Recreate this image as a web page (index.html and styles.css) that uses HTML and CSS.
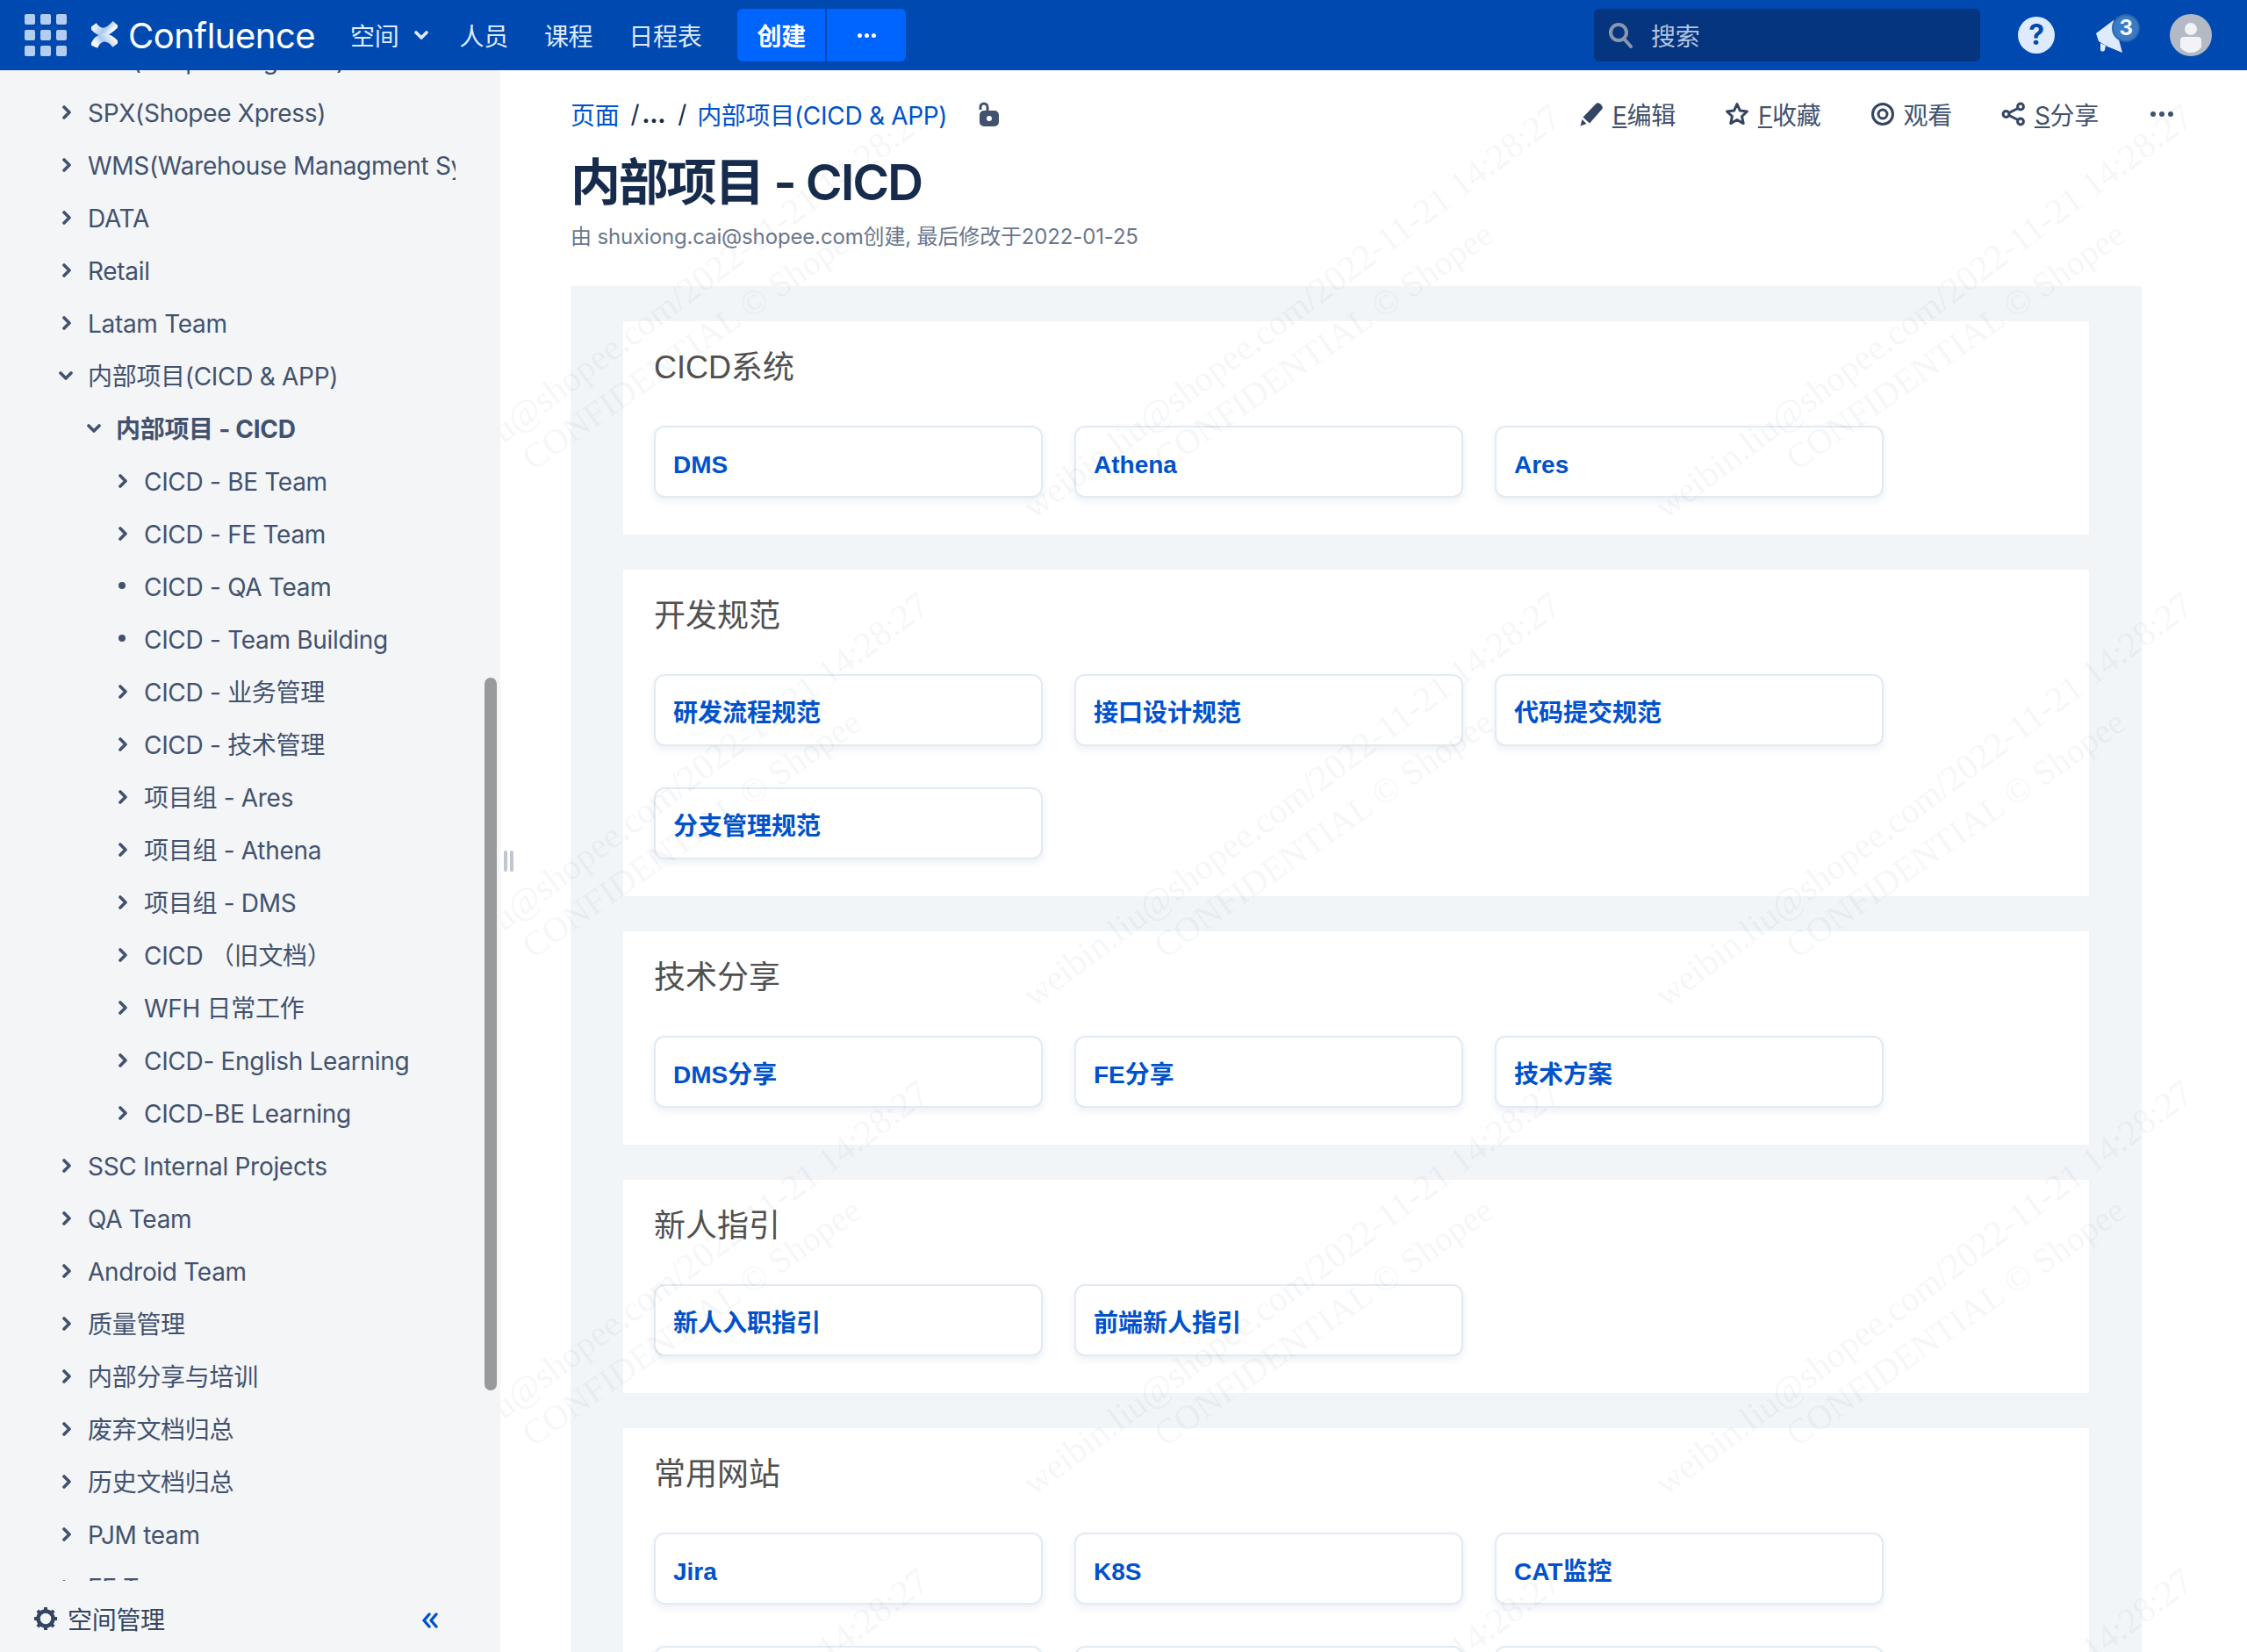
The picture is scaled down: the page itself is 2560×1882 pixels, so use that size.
FILE: index.html
```html
<!DOCTYPE HTML>
<html>
<head>
	<meta charset="utf-8">
	<title>内部项目 - CICD</title>
	<link rel="stylesheet" href="styles.css">
</head>
<body>
	<svg class="defs" width="0" height="0">
		<defs>
			<symbol id="chev-r" viewBox="0 0 10 16"><path d="M2 2l6 6-6 6" fill="none" stroke="currentColor" stroke-width="3.600" stroke-linecap="round" stroke-linejoin="round"/></symbol>
			<symbol id="chev-d" viewBox="0 0 16 10"><path d="M2 2l6 6 6-6" fill="none" stroke="currentColor" stroke-width="3.600" stroke-linecap="round" stroke-linejoin="round"/></symbol>
			<linearGradient id="logo-a" x1="0" y1="0" x2="1" y2="0.300"><stop offset="0" stop-color="#fff"/><stop offset="0.65" stop-color="#a9c8f0"/><stop offset="1" stop-color="#f4f8ff"/></linearGradient>
			<linearGradient id="logo-b" x1="1" y1="0" x2="0" y2="0.300"><stop offset="0" stop-color="#fff"/><stop offset="0.65" stop-color="#a9c8f0"/><stop offset="1" stop-color="#f4f8ff"/></linearGradient>
		</defs>
	</svg>

	<header class="topbar">
		<div class="apps">
			<i></i><i></i><i></i><i></i><i></i><i></i><i></i><i></i><i></i>
		</div>
		<svg class="logo" viewBox="0 0 30 32">
			<path d="M2 5C10 16 18 14 28 3" fill="none" stroke="url(#logo-a)" stroke-width="9"/>
			<path d="M3 29C8 17 19 15 28 27" fill="none" stroke="url(#logo-b)" stroke-width="9"/>
		</svg>
		<span class="brand">Confluence</span>
		<nav class="nav">
			<a class="nav-item nav-spaces">空间<svg class="nav-chev"><use href="#chev-d"/></svg></a>
			<a class="nav-item">人员</a>
			<a class="nav-item">课程</a>
			<a class="nav-item">日程表</a>
		</nav>
		<div class="create">
			<span class="create-main">创建</span>
			<span class="create-more"><i></i><i></i><i></i></span>
		</div>
		<div class="top-right">
			<div class="search">
				<svg class="search-icon" viewBox="0 0 28 30"><circle cx="12" cy="12" r="9" fill="none" stroke="currentColor" stroke-width="4"/><path d="M18 19l8 9" stroke="currentColor" stroke-width="4" stroke-linecap="round"/></svg>
				<span>搜索</span>
			</div>
			<div class="help">?</div>
			<div class="notify">
				<svg class="horn" viewBox="0 0 32 37"><path d="M0 15L20 0l10 37-17-7-10-6z" fill="#deebff"/><path d="M5 26l6 3-1 5c-1 2-4 2-5 0z" fill="#deebff"/></svg>
				<span class="badge">3</span>
			</div>
			<svg class="avatar" viewBox="0 0 48 48"><circle cx="24" cy="24" r="24" fill="#b3bac5"/><circle cx="24" cy="17" r="7" fill="#f1f3f6"/><path d="M12 30q0-4 4-4h16q4 0 4 4v8q-5 6-12 6t-12-6z" fill="#f1f3f6"/></svg>
		</div>
	</header>

	<div class="page">
		<aside class="side">
			<div class="tree">
				<ul class="tree-list">
					<li class="row"><svg class="arrow"><use href="#chev-r"/></svg><span>SLS(Shopee Logistics)</span></li>
					<li class="row"><svg class="arrow"><use href="#chev-r"/></svg><span>SPX(Shopee Xpress)</span></li>
					<li class="row"><svg class="arrow"><use href="#chev-r"/></svg><span>WMS(Warehouse Managment System)</span></li>
					<li class="row"><svg class="arrow"><use href="#chev-r"/></svg><span>DATA</span></li>
					<li class="row"><svg class="arrow"><use href="#chev-r"/></svg><span>Retail</span></li>
					<li class="row"><svg class="arrow"><use href="#chev-r"/></svg><span>Latam Team</span></li>
					<li class="row"><svg class="arrow-open"><use href="#chev-d"/></svg><span>内部项目(CICD &amp; APP)</span></li>
					<li class="row lv2 current"><svg class="arrow-open"><use href="#chev-d"/></svg><span>内部项目 - CICD</span></li>
					<li class="row lv3"><svg class="arrow"><use href="#chev-r"/></svg><span>CICD - BE Team</span></li>
					<li class="row lv3"><svg class="arrow"><use href="#chev-r"/></svg><span>CICD - FE Team</span></li>
					<li class="row lv3"><b class="dot"></b><span>CICD - QA Team</span></li>
					<li class="row lv3"><b class="dot"></b><span>CICD - Team Building</span></li>
					<li class="row lv3"><svg class="arrow"><use href="#chev-r"/></svg><span>CICD - 业务管理</span></li>
					<li class="row lv3"><svg class="arrow"><use href="#chev-r"/></svg><span>CICD - 技术管理</span></li>
					<li class="row lv3"><svg class="arrow"><use href="#chev-r"/></svg><span>项目组 - Ares</span></li>
					<li class="row lv3"><svg class="arrow"><use href="#chev-r"/></svg><span>项目组 - Athena</span></li>
					<li class="row lv3"><svg class="arrow"><use href="#chev-r"/></svg><span>项目组 - DMS</span></li>
					<li class="row lv3"><svg class="arrow"><use href="#chev-r"/></svg><span>CICD （旧文档）</span></li>
					<li class="row lv3"><svg class="arrow"><use href="#chev-r"/></svg><span>WFH 日常工作</span></li>
					<li class="row lv3"><svg class="arrow"><use href="#chev-r"/></svg><span>CICD- English Learning</span></li>
					<li class="row lv3"><svg class="arrow"><use href="#chev-r"/></svg><span>CICD-BE Learning</span></li>
					<li class="row"><svg class="arrow"><use href="#chev-r"/></svg><span>SSC Internal Projects</span></li>
					<li class="row"><svg class="arrow"><use href="#chev-r"/></svg><span>QA Team</span></li>
					<li class="row"><svg class="arrow"><use href="#chev-r"/></svg><span>Android Team</span></li>
					<li class="row"><svg class="arrow"><use href="#chev-r"/></svg><span>质量管理</span></li>
					<li class="row"><svg class="arrow"><use href="#chev-r"/></svg><span>内部分享与培训</span></li>
					<li class="row"><svg class="arrow"><use href="#chev-r"/></svg><span>废弃文档归总</span></li>
					<li class="row"><svg class="arrow"><use href="#chev-r"/></svg><span>历史文档归总</span></li>
					<li class="row"><svg class="arrow"><use href="#chev-r"/></svg><span>PJM team</span></li>
					<li class="row"><svg class="arrow"><use href="#chev-r"/></svg><span>FE Team</span></li>
				</ul>
				<div class="thumb"></div>
			</div>
			<div class="side-foot">
				<svg class="gear" viewBox="0 0 28 28"><circle cx="14" cy="14" r="8.5" fill="none" stroke="currentColor" stroke-width="4.5"/><path d="M14 1v4M14 23v4M1 14h4M23 14h4M4.800 4.800l3 3M20.200 20.200l3 3M23.200 4.800l-3 3M7.800 20.200l-3 3" stroke="currentColor" stroke-width="4"/></svg>
				<span>空间管理</span>
				<svg class="collapse" viewBox="0 0 20 18"><path d="M9 2L3 9l6 7M17 2l-6 7 6 7" fill="none" stroke="currentColor" stroke-width="3.400" stroke-linecap="round" stroke-linejoin="round"/></svg>
			</div>
		</aside>

		<main class="main">
			<div class="top-row">
				<div class="crumbs">
					<a>页面</a><span class="sep sep-first">/</span><span class="ell">...</span><span class="sep">/</span><a>内部项目(CICD &amp; APP)</a>
					<svg class="lock" viewBox="0 0 26 28"><path d="M4 9V6a4 4 0 0 1 8 0v5" fill="none" stroke="#42526e" stroke-width="3"/><rect x="3" y="10" width="22" height="18" rx="5" fill="#42526e"/><circle cx="14" cy="19" r="3" fill="#fff"/></svg>
				</div>
				<div class="actions">
					<a class="act"><svg class="act-icon" viewBox="0 0 28 28"><path d="M20 1.500q2.500-1 5 1.500t1.500 5L12 24.500 4.500 17.500z" fill="#344563"/><path d="M3.500 20l5 5-7 2.500z" fill="#344563"/></svg><span><u>E</u>编辑</span></a>
					<a class="act"><svg class="act-icon" viewBox="0 0 28 28"><path d="M14 2.500l3.400 7.600 8.100.9-6 5.500 1.700 8.100-7.200-4.100-7.200 4.100 1.700-8.100-6-5.500 8.100-.9z" fill="none" stroke="#344563" stroke-width="3" stroke-linejoin="round"/></svg><span><u>F</u>收藏</span></a>
					<a class="act"><svg class="act-icon" viewBox="0 0 28 28"><circle cx="14" cy="14" r="11.500" fill="none" stroke="#344563" stroke-width="3"/><circle cx="14" cy="14" r="5" fill="none" stroke="#344563" stroke-width="3"/></svg><span>观看</span></a>
					<a class="act"><svg class="act-icon" viewBox="0 0 28 28"><path d="M22 6L6 14l16 8" fill="none" stroke="#344563" stroke-width="3"/><circle cx="22" cy="5.500" r="3.400" fill="#fff" stroke="#344563" stroke-width="3"/><circle cx="5.500" cy="14" r="3.400" fill="#fff" stroke="#344563" stroke-width="3"/><circle cx="22" cy="22.500" r="3.400" fill="#fff" stroke="#344563" stroke-width="3"/></svg><span><u>S</u>分享</span></a>
					<span class="more"><i></i><i></i><i></i></span>
				</div>
			</div>
			<h1 class="title">内部项目 - CICD</h1>
			<p class="meta">由 shuxiong.cai@shopee.com创建, 最后修改于2022-01-25</p>

			<div class="board">
				<section class="panel">
					<h2>CICD系统</h2>
					<div class="cards">
						<a class="card">DMS</a>
						<a class="card">Athena</a>
						<a class="card">Ares</a>
					</div>
				</section>
				<section class="panel panel-tall">
					<h2>开发规范</h2>
					<div class="cards">
						<a class="card">研发流程规范</a>
						<a class="card">接口设计规范</a>
						<a class="card">代码提交规范</a>
						<a class="card">分支管理规范</a>
					</div>
				</section>
				<section class="panel">
					<h2>技术分享</h2>
					<div class="cards">
						<a class="card">DMS分享</a>
						<a class="card">FE分享</a>
						<a class="card">技术方案</a>
					</div>
				</section>
				<section class="panel">
					<h2>新人指引</h2>
					<div class="cards">
						<a class="card">新人入职指引</a>
						<a class="card">前端新人指引</a>
					</div>
				</section>
				<section class="panel">
					<h2>常用网站</h2>
					<div class="cards">
						<a class="card">Jira</a>
						<a class="card">K8S</a>
						<a class="card">CAT监控</a>
						<a class="card"></a>
						<a class="card"></a>
						<a class="card"></a>
					</div>
				</section>
			</div>

			<div class="handle"><i></i><i></i></div>

			<svg class="watermark" width="100%" height="100%">
				<defs>
					<pattern id="wm" x="550" y="0" width="720" height="556" patternUnits="userSpaceOnUse">
						<text x="58" y="513" transform="rotate(-37 58 513)" class="wm-text">weibin.liu@shopee.com/2022-11-21 14:28:27</text>
						<text x="207" y="457" transform="rotate(-35 207 457)" class="wm-text wm-sub">CONFIDENTIAL © Shopee</text>
					</pattern>
				</defs>
				<rect width="100%" height="100%" fill="url(#wm)"/>
			</svg>
		</main>
	</div>
</body>
</html>
```

FILE: styles.css
```css
* {
	box-sizing: border-box;
}
html, body {
	margin: 0;
	height: 100%;
}
body {
	display: flex;
	flex-direction: column;
	overflow: hidden;
	background-color: #fff;
	font-family: Inter, "Noto Sans CJK SC", sans-serif;
	font-size: 28px;
	letter-spacing: -0.3px;
	color: #42526e;
}
.defs {
	position: absolute;
}

/* top bar */
.topbar {
	flex: none;
	position: relative;
	z-index: 10;
	display: flex;
	align-items: center;
	height: 80px;
	padding: 0 40px 0 28px;
	background-color: #0049b0;
	color: #deebff;
}
.apps {
	display: grid;
	grid-template-columns: repeat(3, 12px);
	grid-auto-rows: 12px;
	gap: 6px;
}
.apps i {
	border-radius: 2px;
	background-color: #b3cdf0;
}
.logo {
	width: 30px;
	height: 32px;
	margin-left: 28px;
}
.brand {
	margin-left: 12px;
	font-size: 40px;
	letter-spacing: -0.5px;
	color: #fff;
}
.nav {
	display: flex;
	align-items: center;
	margin-left: 40px;
}
.nav-item {
	display: flex;
	align-items: center;
	margin-right: 41px;
}
.nav-chev {
	width: 16px;
	height: 10px;
	margin-left: 17px;
}
.nav-spaces {
	margin-right: 36px;
}
.create {
	display: flex;
	height: 60px;
	color: #fff;
	font-weight: 700;
}
.create-main {
	display: flex;
	align-items: center;
	padding: 0 22px;
	width: 100px;
	border-radius: 6px 0 0 6px;
	background-color: #0065ff;
}
.create-more {
	display: flex;
	align-items: center;
	justify-content: center;
	gap: 3px;
	width: 90px;
	margin-left: 2px;
	border-radius: 0 6px 6px 0;
	background-color: #0065ff;
}
.create-more i {
	width: 5px;
	height: 5px;
	border-radius: 50%;
	background-color: #fff;
}
.top-right {
	display: flex;
	align-items: center;
	margin-left: auto;
}
.search {
	display: flex;
	align-items: center;
	width: 440px;
	height: 60px;
	padding-left: 16px;
	border-radius: 6px;
	background-color: #05357f;
	color: #b3c5e0;
}
.search-icon {
	width: 28px;
	height: 30px;
	margin-right: 21px;
	color: #8a97ad;
}
.help {
	width: 42px;
	height: 42px;
	margin-left: 43px;
	border-radius: 50%;
	background-color: #deebff;
	color: #0049b0;
	font-weight: 700;
	font-size: 32px;
	line-height: 42px;
	text-align: center;
}
.notify {
	position: relative;
	width: 50px;
	height: 50px;
	margin-left: 47px;
}
.horn {
	position: absolute;
	left: 0;
	top: 8px;
	width: 32px;
	height: 37px;
}
.badge {
	position: absolute;
	left: 18px;
	top: 1px;
	width: 32px;
	height: 32px;
	border: 2px solid #2f64a8;
	border-radius: 50%;
	background-color: #3a7bc8;
	color: #fff;
	font-size: 24px;
	font-weight: 700;
	line-height: 28px;
	text-align: center;
}
.avatar {
	width: 48px;
	height: 48px;
	margin-left: 34px;
}

/* page */
.page {
	flex: 1;
	display: flex;
	min-height: 0;
}
.side {
	flex: none;
	display: flex;
	flex-direction: column;
	width: 570px;
	background-color: #f4f5f7;
}
.tree {
	position: relative;
	flex: 1;
	min-height: 0;
	overflow: hidden;
}
.tree-list {
	list-style: none;
	margin: -41px 0 0;
	padding: 0;
}
.row {
	display: flex;
	align-items: center;
	height: 60px;
	padding: 0 51px 0 64px;
	white-space: nowrap;
}
.row span {
	overflow: hidden;
	line-height: 40px;
}
.lv2 {
	padding-left: 96px;
}
.lv3 {
	padding-left: 128px;
}
.current {
	font-weight: 700;
}
.arrow {
	flex: none;
	width: 10px;
	height: 16px;
	margin: -2px 19px 0 7px;
}
.arrow-open {
	flex: none;
	width: 16px;
	height: 10px;
	margin: -2px 17px 0 3px;
}
.dot {
	flex: none;
	width: 8px;
	height: 8px;
	margin: -5px 21px 0 7px;
	border-radius: 50%;
	background-color: #42526e;
}
.thumb {
	position: absolute;
	right: 4px;
	top: 692px;
	width: 14px;
	height: 812px;
	border-radius: 7px;
	background-color: #999a9c;
}
.side-foot {
	flex: none;
	display: flex;
	align-items: center;
	height: 81px;
	padding: 5px 70px 0 38px;
	color: #344563;
}
.gear {
	width: 28px;
	height: 28px;
	margin-right: 11px;
}
.collapse {
	width: 20px;
	height: 18px;
	margin: 4px 0 0 auto;
	color: #0052cc;
}

/* main */
.main {
	position: relative;
	flex: 1;
	min-width: 0;
	overflow: hidden;
	padding: 32px 84px 0 80px;
}
.top-row {
	display: flex;
	align-items: center;
	justify-content: space-between;
	height: 36px;
}
.crumbs {
	display: flex;
	align-items: center;
	color: #172b4d;
}
.crumbs a {
	color: #0052cc;
}
.sep {
	margin: 0 12px 0 14px;
}
.sep-first {
	margin: 0 3px 0 13px;
}
.ell {
	font-weight: 700;
}
.lock {
	width: 26px;
	height: 28px;
	margin-left: 34px;
}
.actions {
	display: flex;
	align-items: center;
}
.act {
	display: flex;
	align-items: center;
	gap: 10px;
	margin-right: 56px;
	color: #42526e;
}
.act-icon {
	width: 28px;
	height: 28px;
}
.more {
	display: flex;
	gap: 4px;
	margin-left: 3px;
}
.more i {
	width: 6px;
	height: 6px;
	border-radius: 50%;
	background-color: #42526e;
}
.title {
	margin: 25px 0 9px;
	font-size: 57px;
	font-weight: 600;
	line-height: 70px;
	letter-spacing: -2.2px;
	color: #172b4d;
}
.meta {
	margin: 0 0 38px;
	font-size: 24px;
	line-height: 36px;
	letter-spacing: -0.15px;
	color: #6b778c;
}
.board {
	margin-right: 36px;
	padding: 40px 60px;
	background-color: #f1f5f8;
}
.panel {
	margin-bottom: 40px;
	padding: 23px 35px 42px;
	background-color: #fff;
}
.panel h2 {
	margin: 0 0 36px;
	font-family: "Liberation Sans", "Noto Sans CJK SC", sans-serif;
	font-size: 36px;
	font-weight: 400;
	line-height: 60px;
	letter-spacing: 0;
	color: #505050;
}
.cards {
	display: grid;
	grid-template-columns: repeat(3, 443px);
	grid-auto-rows: 82px;
	column-gap: 36px;
	row-gap: 47px;
}
.panel-tall .cards {
	margin-top: 1px;
}
.card {
	display: flex;
	align-items: center;
	padding: 8px 20px 0;
	border: 2px solid #e2eaf3;
	border-radius: 12px;
	background-color: #fff;
	box-shadow: 0 4px 8px rgba(40, 80, 140, 0.09);
	font-family: "Liberation Sans", "Noto Sans CJK SC", sans-serif;
	font-size: 28px;
	font-weight: 700;
	line-height: 32px;
	letter-spacing: 0;
	color: #0052cc;
}
.handle {
	position: absolute;
	left: 4px;
	top: 889px;
	display: flex;
	gap: 3px;
}
.handle i {
	width: 4px;
	height: 24px;
	border-radius: 2px;
	background-color: #c1c7d0;
}
.watermark {
	position: absolute;
	left: 0;
	top: 0;
	pointer-events: none;
}
.wm-text {
	font-family: "Liberation Serif", serif;
	font-size: 41px;
	letter-spacing: 0;
	fill: rgba(30, 40, 60, 0.045);
}
.wm-sub {
	font-size: 40px;
}
```
